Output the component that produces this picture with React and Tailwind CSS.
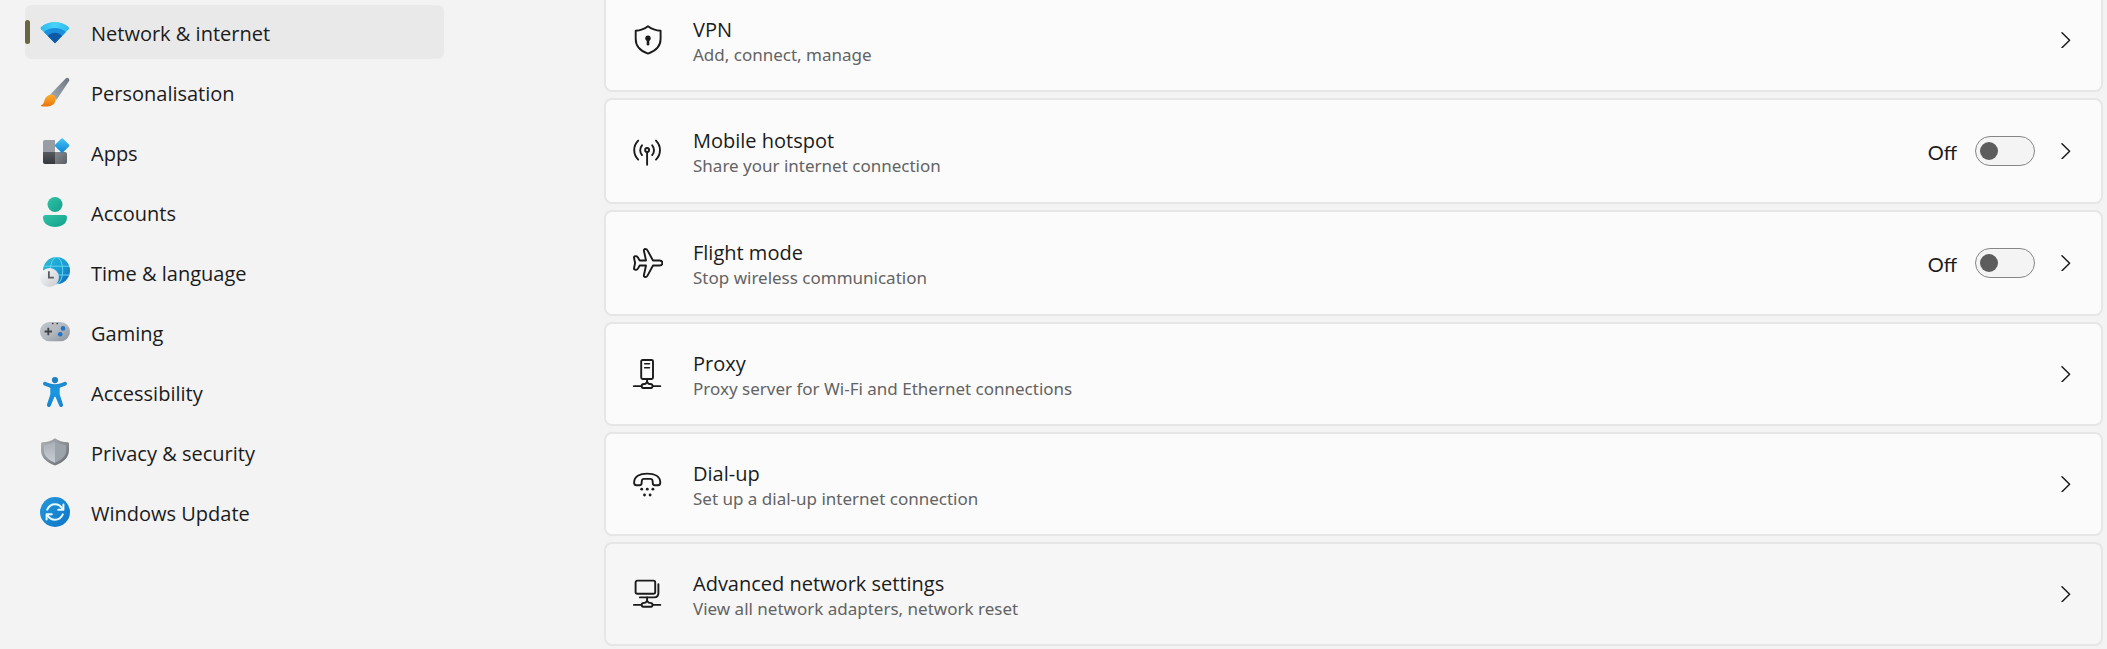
import React from "react";

function NavSvg({ children }) {
  return (
    <svg viewBox="0 0 30 30" className="size-[30px] shrink-0" aria-hidden="true">
      {children}
    </svg>
  );
}

function WifiIcon() {
  return (
    <NavSvg>
      <defs>
        <linearGradient id="wifiTop" x1="0" y1="0" x2="1" y2="0">
          <stop offset="0" stopColor="#2fb9ea" />
          <stop offset="0.5" stopColor="#45d3fb" />
          <stop offset="1" stopColor="#2fb9ea" />
        </linearGradient>
      </defs>
      <path d="M15 26.2 1 12.2Q0 11 1 10C8.5 3.4 21 3.4 28.6 10q1 1 0 2.2Z" fill="url(#wifiTop)" />
      <path d="M15 26.2 3.9 15.1C10 9.6 19.8 9.6 25.9 15.1Z" fill="#1a8fdc" />
      <path d="M15 26.2 7.8 19C11.5 14.8 18.2 14.8 22 19Z" fill="#0f58a6" />
    </NavSvg>
  );
}

function BrushIcon() {
  return (
    <NavSvg>
      <defs>
        <linearGradient id="brushHandle" x1="0" y1="1" x2="1" y2="0">
          <stop offset="0" stopColor="#a5adb5" />
          <stop offset="1" stopColor="#6d7680" />
        </linearGradient>
        <linearGradient id="brushTip" x1="0" y1="0" x2="0" y2="1">
          <stop offset="0" stopColor="#ffb02e" />
          <stop offset="1" stopColor="#e8720c" />
        </linearGradient>
      </defs>
      <path d="M28.7 1.4c.8.8.8 2 .2 2.8L16.6 22.8 10.2 17.6 25.4 1.7c.9-.9 2.4-1.2 3.3-.3Z" fill="url(#brushHandle)" />
      <path d="M8.6 18.2c2.300-1.400 5.300-.7 6.600 1.500 1.300 2.600.2 6.200-2.800 8.200-3 2-8 2-11 1.300-.6-.2-.6-.8 0-1.100 2.100-1.200 2.500-2.500 3.100-4.900.5-2 1.900-3.900 4.100-5Z" fill="url(#brushTip)" />
    </NavSvg>
  );
}

function AppsIcon() {
  return (
    <NavSvg>
      <defs>
        <linearGradient id="appsBlue" x1="0" y1="0" x2="1" y2="1">
          <stop offset="0" stopColor="#45c9f8" />
          <stop offset="1" stopColor="#0f7fd3" />
        </linearGradient>
        <linearGradient id="appsDark" x1="0" y1="0" x2="0" y2="1">
          <stop offset="0" stopColor="#565a5e" />
          <stop offset="1" stopColor="#35383b" />
        </linearGradient>
        <linearGradient id="appsMid" x1="0" y1="0" x2="1" y2="1">
          <stop offset="0" stopColor="#868b91" />
          <stop offset="1" stopColor="#5b5f64" />
        </linearGradient>
      </defs>
      <path d="M5 3h10v12H3V5q0-2 2-2Z" fill="#979da3" />
      <path d="M3 15h12v12H5q-2 0-2-2Z" fill="url(#appsDark)" />
      <path d="M15 15h10q2 0 2 2v8q0 2-2 2H15Z" fill="url(#appsMid)" />
      <rect x="16.6" y="3" width="11" height="11" rx="1.3" transform="rotate(45 22.1 8.5)" fill="url(#appsBlue)" />
    </NavSvg>
  );
}

function AccountsIcon() {
  return (
    <NavSvg>
      <defs>
        <linearGradient id="accountFill" x1="0" y1="0" x2="1" y2="1">
          <stop offset="0" stopColor="#30c3a6" />
          <stop offset="1" stopColor="#12a08c" />
        </linearGradient>
      </defs>
      <circle cx="15" cy="7.5" r="7.5" fill="url(#accountFill)" />
      <path d="M5.5 18h19Q27 18 27 20.5C27 26.5 21.5 30 15 30S3 26.5 3 20.5Q3 18 5.5 18Z" fill="url(#accountFill)" />
    </NavSvg>
  );
}

function TimeIcon() {
  return (
    <NavSvg>
      <defs>
        <linearGradient id="globeFill" x1="0" y1="0" x2="1" y2="1">
          <stop offset="0" stopColor="#2cc0d4" />
          <stop offset="0.5" stopColor="#1a9fd6" />
          <stop offset="1" stopColor="#0e63b8" />
        </linearGradient>
        <linearGradient id="clockFill" x1="0" y1="0" x2="1" y2="1">
          <stop offset="0" stopColor="#fafafa" />
          <stop offset="1" stopColor="#c9cbd0" />
        </linearGradient>
      </defs>
      <circle cx="16.5" cy="13.6" r="13.5" fill="url(#globeFill)" />
      <g fill="none" stroke="#62d6ee" strokeWidth="1">
        <ellipse cx="16.5" cy="13.6" rx="6.2" ry="13.3" />
        <path d="M4 9.2h25M4 18h25" />
      </g>
      <circle cx="9.5" cy="20.5" r="9.5" fill="url(#clockFill)" />
      <path d="M8.9 14.2v6.500h5" fill="none" stroke="#5a5d61" strokeWidth="1.8" />
    </NavSvg>
  );
}

function GamingIcon() {
  return (
    <NavSvg>
      <defs>
        <linearGradient id="padFill" x1="0" y1="0" x2="1" y2="1">
          <stop offset="0" stopColor="#c2c6cc" />
          <stop offset="0.5" stopColor="#b3b8bf" />
          <stop offset="1" stopColor="#8b9199" />
        </linearGradient>
      </defs>
      <rect x="0" y="5" width="30" height="19.2" rx="9.6" fill="url(#padFill)" />
      <path d="M8.3 10.8v7.4M4.6 14.5H12" stroke="#3e4247" strokeWidth="1.8" />
      <circle cx="23" cy="11.4" r="2.3" fill="#1f74c4" />
      <circle cx="20.2" cy="17.3" r="2.3" fill="#1f74c4" />
      <circle cx="12.8" cy="6.6" r="0.8" fill="#33363a" />
      <circle cx="17.2" cy="6.6" r="0.8" fill="#33363a" />
    </NavSvg>
  );
}

function AccessibilityIcon() {
  return (
    <NavSvg>
      <defs>
        <linearGradient id="personFill" x1="0" y1="0" x2="0" y2="1">
          <stop offset="0" stopColor="#1f86c9" />
          <stop offset="0.4" stopColor="#1a98e2" />
          <stop offset="1" stopColor="#1683d0" />
        </linearGradient>
      </defs>
      <circle cx="15" cy="3.1" r="3.1" fill="#1c7fc2" />
      <path
        d="M5.600 5c2.600 1 5.800 2.200 9.400 2.200S21.800 6 24.400 5c1-.4 2 0 2.400 1 .4 1-.1 2-1.100 2.400l-5.300 2.200c-.5.200-.7.500-.7 1v5.200c0 .4.100.8.200 1.100l3.100 9.600c.3 1-.2 2-1.200 2.400-1 .3-2.100-.2-2.500-1.200L15.700 20.200c-.3-.6-1.100-.6-1.400 0l-3.600 8.500c-.4 1-1.500 1.500-2.500 1.200-1-.4-1.500-1.400-1.200-2.400l3.100-9.600c.1-.3.2-.7.200-1.100v-5.200c0-.5-.2-.8-.7-1L4.300 8.400C3.300 8 2.800 7 3.200 6c.4-1 1.400-1.400 2.400-1Z"
        fill="url(#personFill)"
      />
    </NavSvg>
  );
}

function PrivacyIcon() {
  return (
    <NavSvg>
      <defs>
        <linearGradient id="shieldRim" x1="0" y1="0" x2="1" y2="1">
          <stop offset="0" stopColor="#b0b3b7" />
          <stop offset="1" stopColor="#66696d" />
        </linearGradient>
        <linearGradient id="shieldLeft" x1="0" y1="0" x2="0" y2="1">
          <stop offset="0" stopColor="#a9afb7" />
          <stop offset="1" stopColor="#c8cdd4" />
        </linearGradient>
      </defs>
      <path d="M15 1.3C18.600 4 23 5 27.800 5.300Q29 5.400 29 6.600V13c0 7-5 12.500-14 15.500C6 25.500 1 20 1 13V6.600Q1 5.400 2.200 5.300C7 5 11.400 4 15 1.300Z" fill="url(#shieldRim)" />
      <path d="M15 4.600c-3.300 2-7 3-11.200 3.300V13c0 5.500 3.800 9.900 11.200 12.700Z" fill="url(#shieldLeft)" />
      <path d="M15 4.600c3.300 2 7 3 11.200 3.300V13c0 5.500-3.800 9.900-11.200 12.700Z" fill="#9da3ab" />
    </NavSvg>
  );
}

function UpdateIcon() {
  return (
    <NavSvg>
      <defs>
        <linearGradient id="updateFill" x1="0" y1="0" x2="1" y2="1">
          <stop offset="0" stopColor="#2499de" />
          <stop offset="1" stopColor="#0e74c6" />
        </linearGradient>
      </defs>
      <circle cx="15" cy="15" r="15" fill="url(#updateFill)" />
      <g fill="none" stroke="#e9fbff" strokeWidth="2" strokeLinecap="round" strokeLinejoin="round">
        <path d="M7.200 12.600C8.700 9.300 11.600 7.200 15 7.200c3.200 0 5.800 1.600 7.600 4.800" />
        <path d="M23.400 7.500v5.200h-5.200" />
        <path d="M22.800 17.400C21.300 20.700 18.400 22.800 15 22.800c-3.200 0-5.800-1.600-7.600-4.800" />
        <path d="M6.600 22.500v-5.200h5.200" />
      </g>
    </NavSvg>
  );
}

function LineSvg({ children }) {
  return (
    <svg
      viewBox="0 0 30 30"
      className="size-[30px] shrink-0"
      fill="none"
      stroke="currentColor"
      strokeWidth="1.9"
      strokeLinecap="round"
      strokeLinejoin="round"
      aria-hidden="true"
    >
      {children}
    </svg>
  );
}

function VpnIcon() {
  return (
    <LineSvg>
      <path d="M15 1.200C11.500 3.900 7.300 5.500 2.700 5.700V14c0 7 4.600 12 12.300 14.600C22.700 26 27.600 21 27.600 14V5.700C23 5.500 18.500 3.900 15 1.200Z" />
      <circle cx="15" cy="13.2" r="2.7" fill="currentColor" stroke="none" />
      <path d="M15 14v5.200" strokeWidth="2.6" />
    </LineSvg>
  );
}

function HotspotIcon() {
  return (
    <LineSvg>
      <circle cx="14.1" cy="14" r="2" />
      <path d="M14.100 16.500v12.300" />
      <path d="M9 9.300c-2.400 2.700-2.400 7 0 9.700M19.200 9.300c2.400 2.700 2.400 7 0 9.700" />
      <path d="M5.200 4.600c-5.300 5.200-5.300 13.800 0 19M23 4.600c5.300 5.200 5.300 13.800 0 19" />
    </LineSvg>
  );
}

function FlightIcon() {
  return (
    <LineSvg>
      <path d="M20 12.500 14.500 2.400C14 1.400 13.200 1 12.200 1c-1 0-1.500.8-1.300 1.700L13 12.500H6.700L4.900 9.400C4.500 8.700 4 8.300 3.200 8.300H2.100c-.9 0-1.300.6-1.100 1.500L2.100 15 1 20.200c-.2.900.2 1.500 1.100 1.500h1.100c.8 0 1.300-.4 1.700-1.100l1.800-3.100H13l-2.100 9.800c-.2.900.3 1.700 1.300 1.700 1 0 1.800-.4 2.300-1.400L20 17.500h6.600c1.700 0 2.800-1.100 2.800-2.500s-1.100-2.500-2.800-2.500Z" />
    </LineSvg>
  );
}

function ProxyIcon() {
  return (
    <LineSvg>
      <rect x="8.2" y="0.95" width="11.8" height="19" rx="1.4" />
      <path d="M11.700 4.700h4.800M11.700 8.700h4.800" strokeWidth="1.6" />
      <path d="M14.100 20v2.500M.9 27.100h7.800M19.500 27.100h7.800" />
      <path d="M12.500 24.800 14.100 23l1.600 1.800 2.800.5q1 .2 1 1.100v1.400q0 1.200-1.200 1.200H9.900q-1.200 0-1.200-1.200v-1.400q0-.9 1-1.100Z" />
    </LineSvg>
  );
}

function DialUpIcon() {
  return (
    <LineSvg>
      <path d="M1.100 13.600C1.100 7.500 6.600 4.600 14.200 4.600S27.300 7.500 27.300 13.600c0 1.900-.7 2.700-2.200 2.700h-3.300c-1.300 0-1.900-.7-2-1.900l-.2-2.400c-.1-1.500-.8-2.100-2.300-2.100h-6.200c-1.500 0-2.200.6-2.300 2.100l-.2 2.400c-.1 1.200-.7 1.900-2 1.900H3.300c-1.500 0-2.200-.8-2.200-2.700Z" />
      <g fill="currentColor" stroke="none">
        <circle cx="8.7" cy="20.2" r="1.4" />
        <circle cx="14.3" cy="20.2" r="1.4" />
        <circle cx="19.9" cy="20.2" r="1.4" />
        <circle cx="11.5" cy="26" r="1.4" />
        <circle cx="17.1" cy="26" r="1.4" />
      </g>
    </LineSvg>
  );
}

function AdvancedIcon() {
  return (
    <LineSvg>
      <rect x="2.6" y="1.6" width="19.6" height="13.2" rx="1.8" />
      <path d="M25.400 5.200v8.900c0 2.800-1.500 4.300-4.300 4.300H6.900" />
      <path d="M14.100 18.500v3M.9 25.900h7.800M19.500 25.900h7.800" />
      <path d="M12.500 23.600 14.100 21.800l1.600 1.800 2.800.5q1 .2 1 1.100v1.400q0 1.200-1.200 1.200H9.900q-1.200 0-1.200-1.200v-1.400q0-.9 1-1.100Z" />
    </LineSvg>
  );
}

function Chevron() {
  return (
    <svg
      viewBox="0 0 10 16"
      className="h-4 w-2.5 shrink-0"
      fill="none"
      stroke="currentColor"
      strokeWidth="1.5"
      strokeLinecap="round"
      strokeLinejoin="round"
      aria-hidden="true"
    >
      <path d="M1 .8 8.600 8.300 1 15.700" />
    </svg>
  );
}

const navItems = [
  { label: "Network & internet", Icon: WifiIcon, active: true },
  { label: "Personalisation", Icon: BrushIcon },
  { label: "Apps", Icon: AppsIcon },
  { label: "Accounts", Icon: AccountsIcon },
  { label: "Time & language", Icon: TimeIcon },
  { label: "Gaming", Icon: GamingIcon },
  { label: "Accessibility", Icon: AccessibilityIcon },
  { label: "Privacy & security", Icon: PrivacyIcon },
  { label: "Windows Update", Icon: UpdateIcon },
];

const settings = [
  { id: "vpn", title: "VPN", text: "Add, connect, manage", Icon: VpnIcon },
  { id: "hotspot", title: "Mobile hotspot", text: "Share your internet connection", Icon: HotspotIcon, toggle: true },
  { id: "flight", title: "Flight mode", text: "Stop wireless communication", Icon: FlightIcon, toggle: true },
  { id: "proxy", title: "Proxy", text: "Proxy server for Wi-Fi and Ethernet connections", Icon: ProxyIcon },
  { id: "dialup", title: "Dial-up", text: "Set up a dial-up internet connection", Icon: DialUpIcon },
  { id: "advanced", title: "Advanced network settings", text: "View all network adapters, network reset", Icon: AdvancedIcon, hovered: true },
];

function NavItem({ label, Icon, active }) {
  return (
    <li>
      <a
        href="#"
        aria-current={active ? "page" : undefined}
        className={`flex h-[54px] items-center rounded-md ${active ? "bg-[#e9e9e9]" : ""}`}
      >
        <span className={`h-6 w-[5px] rounded-full ${active ? "bg-[#69673f]" : ""}`} />
        <span className="ml-2.5 flex items-center gap-[21px]">
          <Icon />
          <span className="pt-1 text-xl leading-7">{label}</span>
        </span>
      </a>
    </li>
  );
}

function Toggle({ id }) {
  const [on, setOn] = React.useState(false);
  return (
    <div className="flex items-center gap-[18px]">
      <label htmlFor={id} className="pt-0.5 font-['Lato',sans-serif] text-xl leading-7">
        {on ? "On" : "Off"}
      </label>
      <input
        id={id}
        type="checkbox"
        role="switch"
        checked={on}
        onChange={(e) => setOn(e.target.checked)}
        className="flex h-[30px] w-[60px] appearance-none items-center rounded-full border border-[#868686] bg-[#f4f4f4] px-1 before:size-[18px] before:rounded-full before:bg-[#5d5d5d] checked:justify-end"
      />
    </div>
  );
}

function SettingCard({ id, title, text, Icon, toggle, hovered }) {
  return (
    <li
      className={`flex items-center rounded-lg border-2 border-[#e6e6e6] pr-[30px] pl-[27px] ${
        toggle ? "h-[106px]" : "h-[104px]"
      } ${hovered ? "bg-[#f6f6f6]" : "bg-[#fbfbfb]"}`}
    >
      <a href="#" className="flex flex-1 items-center gap-[30px]">
        <Icon />
        <span className="flex flex-col pt-0.5">
          <span className="text-xl leading-7">{title}</span>
          <span className="font-['Noto_Sans',sans-serif] text-[17px] leading-[22px] text-[#636363]">{text}</span>
        </span>
      </a>
      {toggle && <Toggle id={`${id}-switch`} />}
      <button type="button" aria-label={`Open ${title}`} className="ml-[26px]">
        <Chevron />
      </button>
    </li>
  );
}

export default function App() {
  return (
    <div className="flex min-h-screen gap-40 overflow-hidden bg-[#f3f3f3] pr-1 pl-[25px] font-['Open_Sans','Noto_Sans',sans-serif] text-[#1b1b1b]">
      <nav className="w-[419px] shrink-0 pt-[5px]" aria-label="Settings">
        <ul className="flex flex-col gap-1.5">
          {navItems.map((item) => (
            <NavItem key={item.label} {...item} />
          ))}
        </ul>
      </nav>
      <main className="h-screen flex-1 overflow-hidden">
        <ul className="-mt-3 flex flex-col gap-1.5">
          {settings.map((item) => (
            <SettingCard key={item.id} {...item} />
          ))}
        </ul>
      </main>
    </div>
  );
}
